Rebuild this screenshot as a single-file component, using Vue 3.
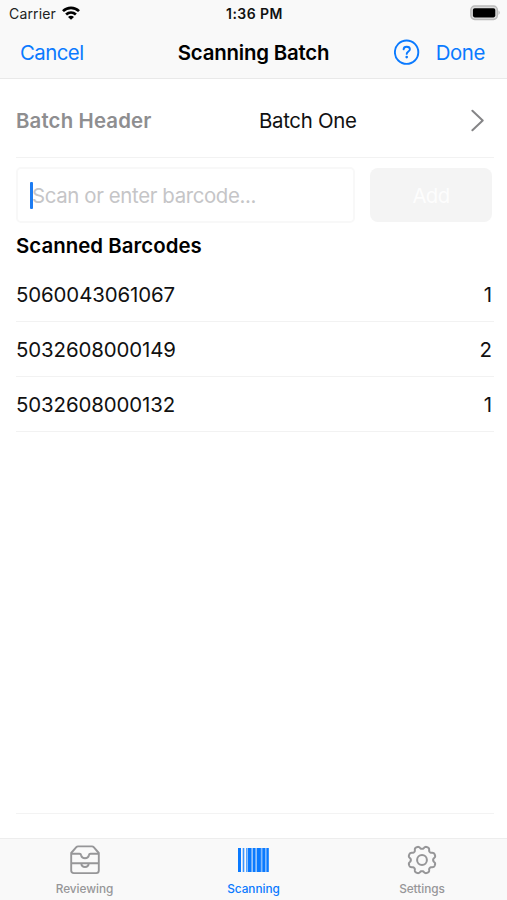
<script setup>
import { ref } from 'vue'

const barcodes = [
  { code: '5060043061067', count: 1 },
  { code: '5032608000149', count: 2 },
  { code: '5032608000132', count: 1 },
]
const tabs = [
  { id: 'reviewing', label: 'Reviewing' },
  { id: 'scanning', label: 'Scanning' },
  { id: 'settings', label: 'Settings' },
]
const active = ref('scanning')

// Barcode strips: [x, width, opacity]
const bars = [
  [0, 3, 1], [4.7, 1.6, 0.8], [8.1, 1, 0.75], [9.6, 3.9, 1], [13.5, 1.4, 0.4],
  [14.9, 2.6, 1], [17.5, 1.4, 0.4], [18.9, 4, 1], [22.9, 1.4, 0.5],
  [24.3, 2.8, 1], [27.1, 1.3, 0.5], [28.4, 2.4, 1],
]

// Eight-toothed gear outline with rounded teeth
const gear = Array.from({ length: 240 }, (_, i) => {
  const a = (i / 240) * Math.PI * 2
  const r = 12.4 + 1.4 * Math.tanh(-1.5 * Math.cos(8 * a) + 0.3) / Math.tanh(1.6)
  return `${i ? 'L' : 'M'}${(15 + r * Math.cos(a)).toFixed(2)} ${(15 + r * Math.sin(a)).toFixed(2)}`
}).join('') + 'Z'
</script>

<template>
  <div class="screen">
    <header class="top">
      <div class="status">
        <div class="carrier">
          <span>Carrier</span>
          <svg width="18" height="14" viewBox="0 0 18 14" fill="none" stroke="#000" stroke-width="2.7">
            <path d="M1 5.1C5.5.7 12.5.7 17 5.1" />
            <path d="M4.1 8.6C7 5.9 11 5.9 13.9 8.6" />
            <path d="M9 13.8L6 10.9C7.7 9.3 10.3 9.3 12 10.9Z" fill="#000" stroke="none" />
          </svg>
        </div>
        <span class="time">1:36 PM</span>
        <svg class="battery" width="31" height="16" viewBox="0 0 31 16">
          <rect x=".9" y="1.1" width="26.4" height="13.3" rx="3.8" fill="#dcdcdc" stroke="#bababa" stroke-width="1.5" />
          <rect x="2.900" y="3.2" width="22.4" height="9.2" rx="1.8" fill="#000" />
          <path d="M28.6 5.6q2 2.1 0 4.4z" fill="#aaa" />
        </svg>
      </div>
      <nav class="nav">
        <a class="cancel">Cancel</a>
        <h1>Scanning Batch</h1>
        <div class="actions">
          <svg width="26" height="26" viewBox="0 0 26 26" fill="none" stroke="#0a7aff">
            <circle cx="12.6" cy="13.2" r="11.7" stroke-width="1.9" />
            <path d="M9.6 10.4C9.7 8.6 11 7.800 12.700 7.800C14.600 7.800 15.900 8.800 15.900 10.300C15.900 12.400 12.700 12.600 12.700 14.900" stroke-width="1.9" stroke-linecap="round" />
            <circle cx="12.7" cy="18.1" r="1.3" fill="#0a7aff" stroke="none" />
          </svg>
          <a class="done">Done</a>
        </div>
      </nav>
    </header>

    <main>
      <div class="batch">
        <span class="label">Batch Header</span>
        <span class="value">Batch One</span>
        <svg width="14" height="24" viewBox="0 0 14 24" fill="none" stroke="#858587" stroke-width="2" stroke-linecap="round" stroke-linejoin="round">
          <path d="M1.4 1.8L11.700 11.5L1.4 21.3" />
        </svg>
      </div>
      <div class="entry">
        <div class="field"><i class="caret"></i><span>Scan or enter barcode...</span></div>
        <button class="add">Add</button>
      </div>
      <h2>Scanned Barcodes</h2>
      <ul>
        <li v-for="b in barcodes" :key="b.code"><span class="code">{{ b.code }}</span><span>{{ b.count }}</span></li>
      </ul>
    </main>

    <footer>
      <div v-for="t in tabs" :key="t.id" class="tab" :class="{ active: t.id === active }">
        <svg v-if="t.id === 'reviewing'" width="30" height="30" viewBox="0 0 30 30" fill="none" stroke="currentColor" stroke-width="1.9" stroke-linejoin="round">
          <path d="M1.2 8L6.3 2.2Q7 1.4 8 1.4H22Q23 1.4 23.7 2.2L28.8 8V25.5Q28.8 28.1 26.2 28.1H3.8Q1.2 28.1 1.2 25.5Z" />
          <path d="M1.2 8.8H9.5Q10.9 8.8 11.1 10.2C12 14.2 18 14.2 18.9 10.2Q19.1 8.8 20.5 8.8H28.8" />
          <path d="M1.2 18.2H28.8M11.3 18.4C11.5 23.1 18.5 23.1 18.7 18.4" />
        </svg>
        <svg v-else-if="t.id === 'scanning'" width="31" height="30" viewBox="0 0 31 30" fill="currentColor">
          <rect v-for="b in bars" :key="b[0]" :x="b[0]" y="3" :width="b[1]" height="24" :opacity="b[2]" />
        </svg>
        <svg v-else width="30" height="30" viewBox="0 0 30 30" fill="none" stroke="currentColor" stroke-width="2" stroke-linejoin="round">
          <path :d="gear" />
          <circle cx="15" cy="15" r="4.9" />
        </svg>
        <span>{{ t.label }}</span>
      </div>
    </footer>
  </div>
</template>

<style>
body { margin: 0; background: #fff; }
</style>

<style scoped>
.screen {
  box-sizing: border-box;
  height: 900px;
  display: flex;
  flex-direction: column;
  font-family: Inter, "Liberation Sans", sans-serif;
  font-size: 20.4px;
  line-height: 26px;
  color: #111;
  background: #fff;
  overflow: hidden;
}
.top {
  box-sizing: border-box;
  height: 79px;
  background: #f9f9f9;
  border-bottom: 1px solid #e9e9e9;
}
.status {
  height: 26px;
  display: grid;
  grid-template-columns: 1fr auto 1fr;
  align-items: center;
  padding: 1px 6px 0 9px;
  font-size: 14px;
  line-height: 18px;
  box-sizing: border-box;
}
.carrier { display: flex; align-items: center; gap: 6px; color: #222; letter-spacing: 0.15px; }
.carrier svg { margin-top: -2px; }
.time { font-weight: 600; font-size: 14px; letter-spacing: 0.45px; color: #111; margin-right: 1px; }
.battery { justify-self: end; margin-top: -1px; }
.nav {
  height: 53px;
  display: grid;
  grid-template-columns: 1fr auto 1fr;
  align-items: center;
  padding: 0 22px 0 20px;
}
h1, h2 { margin: 0; font-size: 20.4px; line-height: 26px; font-weight: 600; color: #000; }
h1 { letter-spacing: -0.2px; padding-left: 2px; }
.cancel, .done { color: #0a7aff; }
.cancel { letter-spacing: -0.55px; }
.done { letter-spacing: -0.4px; }
.actions { display: flex; align-items: center; justify-content: flex-end; gap: 16px; }
.actions svg { margin-top: -2px; }
main {
  height: 735px;
  margin: 0 13px 0 16px;
  box-sizing: border-box;
  border-bottom: 1px solid #f3f3f3;
}
.batch {
  box-sizing: border-box;
  height: 79px;
  display: grid;
  grid-template-columns: 243px 1fr auto;
  align-items: center;
  padding: 6px 9px 0 0;
  border-bottom: 1px solid #f2f2f2;
}
.label { color: #8e8e90; font-weight: 600; letter-spacing: 0.15px; }
.value { letter-spacing: -0.3px; }
.entry { display: flex; gap: 15px; padding: 9px 2px 0 0; }
.field {
  box-sizing: border-box;
  width: 339px;
  height: 56px;
  display: flex;
  align-items: center;
  padding: 1px 0 0 12px;
  border: 2px solid #f8f8f8;
  border-radius: 5px;
  color: #c5c5c7;
  letter-spacing: -0.37px;
}
.caret { width: 3px; height: 27px; margin-right: -1px; border-radius: 1px; background: #1d7cf2; }
.add {
  flex: 1;
  height: 54px;
  margin-top: 1px;
  padding: 2px 0 0;
  border: 0;
  border-radius: 8px;
  background: #f4f4f4;
  color: #fdfdfd;
  font: inherit;
  letter-spacing: -0.6px;
}
h2 { margin-top: 10px; letter-spacing: 0.05px; }
ul { list-style: none; margin: 8px 0 0; padding: 0; }
li {
  box-sizing: border-box;
  height: 55px;
  display: flex;
  align-items: center;
  justify-content: space-between;
  padding: 1px 2px 0 0;
  border-bottom: 1px solid #f2f2f2;
}
.code { letter-spacing: -0.1px; }
footer {
  box-sizing: border-box;
  height: 62px;
  margin-top: 24px;
  display: grid;
  grid-template-columns: repeat(3, 1fr);
  background: #f9f9f9;
  border-top: 1px solid #ededed;
}
.tab {
  display: flex;
  flex-direction: column;
  align-items: center;
  padding-top: 6px;
  color: #969698;
  font-size: 11.8px;
  line-height: 16px;
  font-weight: 500;
  letter-spacing: -0.03px;
}
.tab span { margin-top: 6px; }
.tab:last-child { padding-right: 1px; }
.tab.active { color: #0a7aff; }
</style>
